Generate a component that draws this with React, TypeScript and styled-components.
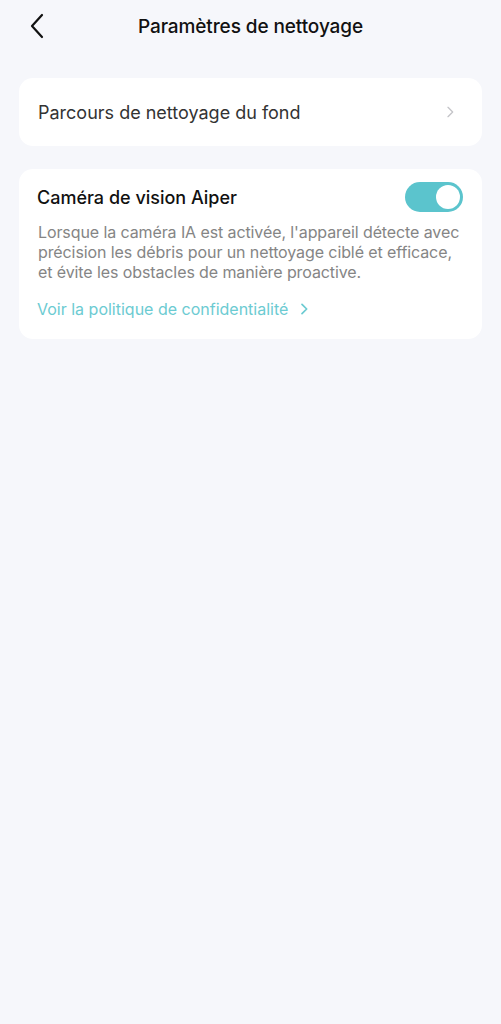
import * as React from 'react';
import { useState } from 'react';
import styled, { createGlobalStyle } from 'styled-components';

const GlobalStyle = createGlobalStyle`
  html, body {
    margin: 0;
    padding: 0;
    background: #f6f7fb;
    font-family: Inter, 'Noto Sans', sans-serif;
    -webkit-font-smoothing: antialiased;
  }
`;

const Page = styled.div`
  min-height: 1024px;
  background: #f6f7fb;
  display: flex;
  flex-direction: column;
`;

const Header = styled.div`
  height: 52px;
  display: flex;
  align-items: center;
  justify-content: center;
  position: relative;
`;

const BackButton = styled.button`
  position: absolute;
  left: 24px;
  top: 12px;
  width: 28px;
  height: 28px;
  border: none;
  background: transparent;
  padding: 0;
  display: flex;
  align-items: center;
  justify-content: center;
  cursor: pointer;
`;

const Title = styled.div`
  font-size: 19px;
  font-weight: 500;
  color: #111;
  letter-spacing: -0.1px;
`;

const Content = styled.div`
  padding: 26px 19px 0 19px;
  display: flex;
  flex-direction: column;
  gap: 23px;
`;

const Card = styled.div`
  background: #fff;
  border-radius: 14px;
`;

const NavRow = styled.div`
  height: 68px;
  display: flex;
  align-items: center;
  justify-content: space-between;
  padding: 0 24px 0 19px;
`;

const RowLabel = styled.span<{ $dark?: boolean }>`
  font-size: 18px;
  color: ${p => (p.$dark ? '#111' : '#333')};
  font-weight: ${p => (p.$dark ? 500 : 400)};
`;

const CameraCard = styled(Card)`
  padding: 12px 16px 20px 18px;
  display: flex;
  flex-direction: column;
`;

const ToggleRow = styled.div`
  display: flex;
  align-items: center;
  justify-content: space-between;
  height: 32px;
  padding-right: 3px;
`;

const Switch = styled.button<{ $on: boolean }>`
  width: 58px;
  height: 30px;
  border-radius: 15px;
  border: none;
  padding: 0;
  background: ${p => (p.$on ? '#5bc4cd' : '#d9dbe0')};
  position: relative;
  cursor: pointer;
  &::after {
    content: '';
    position: absolute;
    top: 3px;
    left: ${p => (p.$on ? '31px' : '3px')};
    width: 24px;
    height: 24px;
    border-radius: 50%;
    background: #fff;
    transition: left 0.2s;
  }
`;

const Description = styled.p`
  margin: 9px 3px 0 1px;
  font-size: 16px;
  line-height: 20px;
  letter-spacing: -0.1px;
  color: #858585;
`;

const Link = styled.a`
  margin-top: 17px;
  display: flex;
  align-items: center;
  gap: 8px;
  font-size: 16px;
  color: #6ccbd2;
  text-decoration: none;
  cursor: pointer;
`;

const Chevron = ({ color, size, width }: { color: string; size: number; width: number }) => (
  <svg width={size} height={size} viewBox="0 0 24 24" fill="none">
    <path d="M9 5l7 7-7 7" stroke={color} strokeWidth={width} strokeLinecap="round" strokeLinejoin="round" />
  </svg>
);

const App = () => {
  const [on, setOn] = useState(true);
  return (
    <Page>
      <GlobalStyle />
      <Header>
        <BackButton>
          <svg width="28" height="28" viewBox="0 0 28 28" fill="none">
            <path d="M18 3L8 14l10 11" stroke="#111" strokeWidth="2.2" strokeLinecap="round" strokeLinejoin="round" />
          </svg>
        </BackButton>
        <Title>Paramètres de nettoyage</Title>
      </Header>
      <Content>
        <Card>
          <NavRow>
            <RowLabel>Parcours de nettoyage du fond</RowLabel>
            <Chevron color="#c4c4c8" size={16} width={2} />
          </NavRow>
        </Card>
        <CameraCard>
          <ToggleRow>
            <RowLabel $dark>Caméra de vision Aiper</RowLabel>
            <Switch $on={on} onClick={() => setOn(!on)} />
          </ToggleRow>
          <Description>
            Lorsque la caméra IA est activée, l'appareil détecte avec précision les débris pour un nettoyage ciblé et efficace, et évite les obstacles de manière proactive.
          </Description>
          <Link>
            Voir la politique de confidentialité
            <Chevron color="#6ccbd2" size={16} width={2.6} />
          </Link>
        </CameraCard>
      </Content>
    </Page>
  );
};

export default App;
